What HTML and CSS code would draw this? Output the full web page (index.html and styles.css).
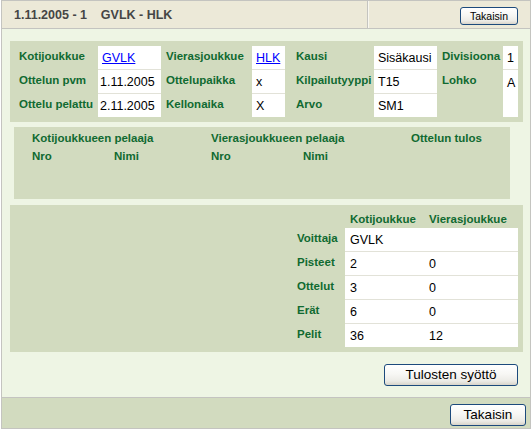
FILE: index.html
```html
<!DOCTYPE html>
<html lang="fi">
<head>
<meta charset="utf-8">
<title>1.11.2005 - 1 GVLK - HLK</title>
<link rel="stylesheet" href="styles.css">
</head>
<body>
<div class="frame">
  <div class="header">
    <div class="title">1.11.2005 - 1&nbsp;&nbsp;&nbsp; GVLK - HLK</div>
    <div class="header-actions"><button class="btn btn-small" type="button">Takaisin</button></div>
  </div>

  <div class="content">
    <div class="box info">
      <table class="info-table">
        <colgroup>
          <col class="c-l1"><col class="c-v1"><col class="c-l2"><col class="c-v2">
          <col class="c-l3"><col class="c-v3"><col class="c-l4"><col class="c-v4">
        </colgroup>
        <tr>
          <th class="lbl pad-wide">Kotijoukkue</th><td class="val sep"><a href="#" class="link">GVLK</a></td>
          <th class="lbl">Vierasjoukkue</th><td class="val sep"><a href="#" class="link">HLK</a></td>
          <th class="lbl pad-wide">Kausi</th><td class="val sep">Sisäkausi</td>
          <th class="lbl">Divisioona</th><td class="val sep">1</td>
        </tr>
        <tr>
          <th class="lbl pad-wide">Ottelun pvm</th><td class="val sep tight">1.11.2005</td>
          <th class="lbl">Ottelupaikka</th><td class="val sep">x</td>
          <th class="lbl pad-wide">Kilpailutyyppi</th><td class="val sep">T15</td>
          <th class="lbl">Lohko</th><td class="val">A</td>
        </tr>
        <tr>
          <th class="lbl pad-wide">Ottelu pelattu</th><td class="val tight">2.11.2005</td>
          <th class="lbl">Kellonaika</th><td class="val">X</td>
          <th class="lbl pad-wide">Arvo</th><td class="val">SM1</td>
          <th class="lbl"></th><td class="val"></td>
        </tr>
      </table>
    </div>

    <div class="box players">
      <div class="players-grid">
        <div class="ph span2">Kotijoukkueen pelaaja</div>
        <div class="ph span2">Vierasjoukkueen pelaaja</div>
        <div class="ph">Ottelun tulos</div>
        <div class="ph">Nro</div>
        <div class="ph">Nimi</div>
        <div class="ph">Nro</div>
        <div class="ph">Nimi</div>
        <div class="ph"></div>
      </div>
    </div>

    <div class="box results">
      <table class="res-table">
        <colgroup><col class="r-l"><col class="r-k"><col class="r-v"></colgroup>
        <tr class="res-head">
          <th></th>
          <th class="colhead">Kotijoukkue</th>
          <th class="colhead">Vierasjoukkue</th>
        </tr>
        <tr>
          <th class="lbl rl">Voittaja</th><td class="val rv sep">GVLK</td><td class="val rv sep"></td>
        </tr>
        <tr>
          <th class="lbl rl">Pisteet</th><td class="val rv sep">2</td><td class="val rv sep">0</td>
        </tr>
        <tr>
          <th class="lbl rl">Ottelut</th><td class="val rv sep">3</td><td class="val rv sep">0</td>
        </tr>
        <tr>
          <th class="lbl rl">Erät</th><td class="val rv sep">6</td><td class="val rv sep">0</td>
        </tr>
        <tr class="last">
          <th class="lbl rl">Pelit</th><td class="val rv">36</td><td class="val rv">12</td>
        </tr>
      </table>
    </div>

    <div class="actions">
      <button class="btn btn-big btn-wide" type="button">Tulosten syöttö</button>
    </div>
  </div>

  <div class="footer">
    <button class="btn btn-big btn-back" type="button">Takaisin</button>
  </div>
</div>
</body>
</html>
```

FILE: styles.css
```css
* { box-sizing: border-box; }

html, body {
  margin: 0;
  padding: 0;
  background: #ffffff;
}

body {
  font-family: "Liberation Sans", Arial, sans-serif;
  color: #000;
}

.frame {
  margin-left: 1px;
  width: 530px;
  border: 1px solid #c4c4c0;
  background: #eef5e4;
}

/* Header */
.header {
  display: flex;
  height: 28px;
  background: #ece9d8;
  border-bottom: 1px solid #c4c4c0;
}

.title {
  width: 365px;
  padding-left: 12px;
  display: flex;
  align-items: center;
  font-size: 12.5px;
  font-weight: bold;
  color: #454545;
  white-space: nowrap;
}

.header-actions {
  flex: 1;
  display: flex;
  justify-content: flex-end;
  align-items: flex-start;
  padding: 6px 12px 0 0;
  border-left: 1px solid #c4c4c0;
  box-shadow: inset 1px 0 0 #f8f7f0;
}

/* Buttons */
.btn {
  font-family: "Liberation Sans", Arial, sans-serif;
  color: #000;
  border: 1px solid #1c4a7c;
  border-radius: 3px;
  background: linear-gradient(#ffffff 0%, #f7f7f4 45%, #ecebe6 80%, #d8d4ca 100%);
  padding: 0;
  margin: 0;
  cursor: pointer;
}

.btn-small {
  width: 58px;
  height: 18px;
  font-size: 10.5px;
  line-height: 16px;
}

.btn-big {
  height: 22px;
  font-size: 13.5px;
  line-height: 20px;
}

.btn-wide { width: 134px; }
.btn-back { width: 76px; }

/* Content */
.content {
  padding: 12px 7px 11px 8px;
  border-bottom: 1px solid #c4c4c0;
}

.box {
  background: #d2dbbf;
}

.info {
  padding: 5px 5px 5px 0;
  height: 81px;
}

table {
  border-collapse: separate;
  border-spacing: 0;
  table-layout: fixed;
}

.info-table { width: 508px; }

.c-l1 { width: 88px; }
.c-v1 { width: 63px; }
.c-l2 { width: 91px; }
.c-v2 { width: 33px; }
.c-l3 { width: 89px; }
.c-v3 { width: 63px; }
.c-l4 { width: 66px; }
.c-v4 { width: 15px; }

.info-table tr { height: 24px; }
.info-table tr:last-child { height: 23px; }

.lbl {
  text-align: left;
  vertical-align: top;
  padding: 3px 0 0 5px;
  font-size: 11.5px;
  line-height: 14px;
  font-weight: bold;
  color: #106a31;
  white-space: nowrap;
}

.pad-wide { padding-left: 9px; }
.info-table th:nth-child(5) { padding-left: 11px; }

.val {
  background: #ffffff;
  vertical-align: middle;
  padding: 2px 0 0 4px;
  font-size: 12.5px;
  line-height: 15px;
  white-space: nowrap;
  overflow: hidden;
}

.val.tight { padding-left: 2px; }

.sep { border-bottom: 1px solid #e2e2d8; }

.link {
  color: #0000ff;
  text-decoration: underline;
}

/* Players */
.players {
  margin: 5px 0 0 4px;
  width: 496px;
  height: 72px;
}

.players-grid {
  display: grid;
  grid-template-columns: 82px 97px 92px 108px 1fr;
  grid-auto-rows: 18px;
  padding: 4px 0 0 18px;
}

.ph {
  font-size: 11.5px;
  line-height: 14px;
  font-weight: bold;
  color: #106a31;
  white-space: nowrap;
}

.span2 { grid-column: span 2; }

/* Results */
.results {
  margin-top: 6px;
  height: 147px;
  padding: 0 5px 5px 0;
  display: flex;
  justify-content: flex-end;
}

.res-table { width: 228px; }
.r-l { width: 55px; }
.r-k { width: 78px; }
.r-v { width: 95px; }

.res-table tr { height: 24px; }
.res-table tr.last { height: 23px; }
.res-table tr.res-head { height: 23px; }

.colhead {
  text-align: left;
  vertical-align: bottom;
  padding: 0 0 2px 5px;
  font-size: 11.5px;
  line-height: 14px;
  font-weight: bold;
  color: #106a31;
  white-space: nowrap;
}

.colhead + .colhead { padding-left: 6px; }

.rl { padding-left: 7px; }
.rv { padding-left: 5px; }
.rv + .rv { padding-left: 6px; }

/* Actions */
.actions {
  display: flex;
  justify-content: flex-end;
  padding-right: 5px;
  margin-top: 12px;
}

/* Footer */
.footer {
  height: 30px;
  background: #d2dbbf;
  display: flex;
  justify-content: flex-end;
  align-items: flex-start;
  padding: 6px 4px 0 0;
}
```
